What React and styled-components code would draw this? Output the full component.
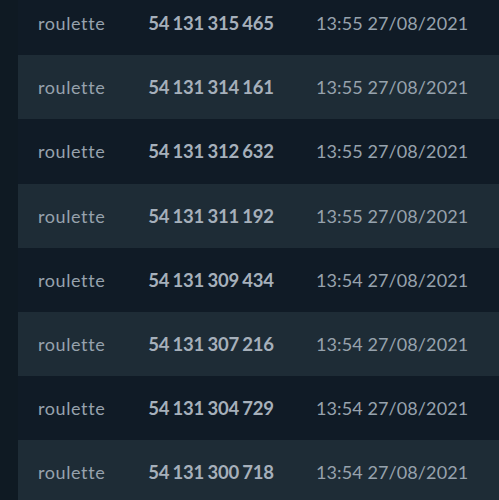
import React from "react";
import styled, { createGlobalStyle } from "styled-components";

const Global = createGlobalStyle`
  html, body { margin: 0; padding: 0; background: #0f1a23; overflow: hidden; }
  body { font-family: "Lato", "Noto Sans", sans-serif; }
`;

const Page = styled.div`
  width: 499px;
  height: 500px;
  overflow: hidden;
  background: #0f1a23;
  padding-left: 18px;
  box-sizing: border-box;
`;

const List = styled.div`
  margin-top: -9px;
  display: flex;
  flex-direction: column;
`;

const Row = styled.div`
  height: 64.2px;
  display: grid;
  grid-template-columns: 115px 156px 1fr;
  align-items: center;
  background: ${(p) => (p.$alt ? "#1e2c36" : "#101b26")};
  color: #97a2ad;
  font-size: 18px;
`;

const Game = styled.span`
  padding-left: 20px;
  letter-spacing: 0.6px;
`;

const Num = styled.span`
  text-align: center;
  font-weight: 700;
  font-size: 18.5px;
  color: #a6b0bb;
  letter-spacing: -0.2px;
  word-spacing: -1px;
`;

const Time = styled.span`
  padding-left: 27px;
  letter-spacing: 0.1px;
`;

const rows = [
  ["54 131 315 465", "13:55 27/08/2021"],
  ["54 131 314 161", "13:55 27/08/2021"],
  ["54 131 312 632", "13:55 27/08/2021"],
  ["54 131 311 192", "13:55 27/08/2021"],
  ["54 131 309 434", "13:54 27/08/2021"],
  ["54 131 307 216", "13:54 27/08/2021"],
  ["54 131 304 729", "13:54 27/08/2021"],
  ["54 131 300 718", "13:54 27/08/2021"],
];

export default function App() {
  return (
    <Page>
      <Global />
      <List>
        {rows.map(([n, t], i) => (
          <Row key={n} $alt={i % 2 === 1}>
            <Game>roulette</Game>
            <Num>{n}</Num>
            <Time>{t}</Time>
          </Row>
        ))}
      </List>
    </Page>
  );
}
